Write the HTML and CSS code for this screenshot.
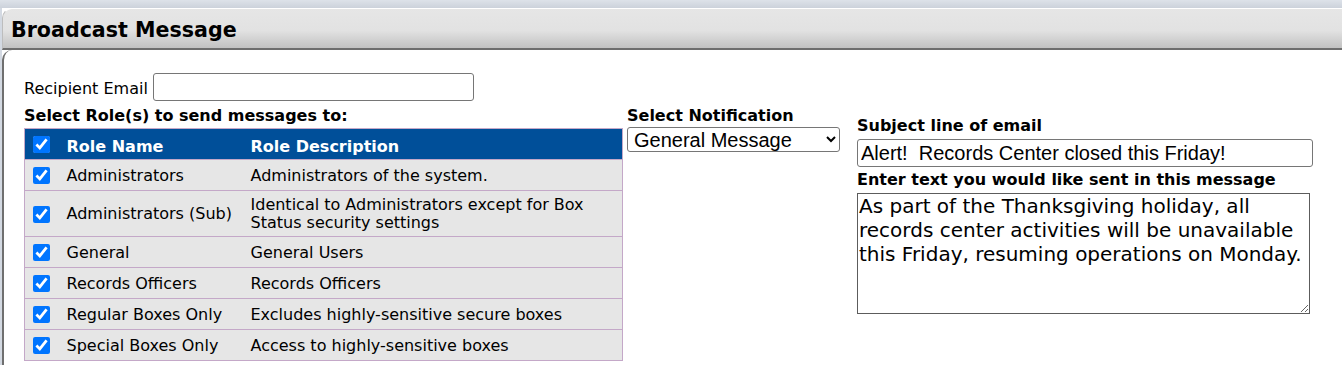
FILE: index.html
```html
<!DOCTYPE html>
<html lang="en">
<head>
    <meta charset="UTF-8">
    <title>Broadcast Message</title>
    <link rel="stylesheet" href="styles.css">
</head>
<body>
<div class="topbar"></div>
<div class="panel">
    <div class="panel-title">
        <h1>Broadcast Message</h1>
    </div>
    <div class="panel-body">
        <div class="email-row">
            <label for="recipient">Recipient Email</label>
            <input type="text" id="recipient" class="recipient">
        </div>
        <div class="columns">
            <div class="col-roles">
                <h2>Select Role(s) to send messages to:</h2>
                <table class="roles">
                    <tr class="head">
                        <th class="chk"><input type="checkbox" checked></th>
                        <th class="name">Role Name</th>
                        <th>Role Description</th>
                    </tr>
                    <tr>
                        <td class="chk"><input type="checkbox" checked></td>
                        <td>Administrators</td>
                        <td>Administrators of the system.</td>
                    </tr>
                    <tr>
                        <td class="chk"><input type="checkbox" checked></td>
                        <td>Administrators (Sub)</td>
                        <td>Identical to Administrators except for Box Status security settings</td>
                    </tr>
                    <tr>
                        <td class="chk"><input type="checkbox" checked></td>
                        <td>General</td>
                        <td>General Users</td>
                    </tr>
                    <tr>
                        <td class="chk"><input type="checkbox" checked></td>
                        <td>Records Officers</td>
                        <td>Records Officers</td>
                    </tr>
                    <tr>
                        <td class="chk"><input type="checkbox" checked></td>
                        <td>Regular Boxes Only</td>
                        <td>Excludes highly-sensitive secure boxes</td>
                    </tr>
                    <tr>
                        <td class="chk"><input type="checkbox" checked></td>
                        <td>Special Boxes Only</td>
                        <td>Access to highly-sensitive boxes</td>
                    </tr>
                </table>
            </div>
            <div class="col-notify">
                <h2>Select Notification</h2>
                <select class="notify">
                    <option>General Message</option>
                    <option>Closure Notice</option>
                    <option>Reminder</option>
                </select>
            </div>
            <div class="col-email">
                <h2>Subject line of email</h2>
                <input type="text" class="subject" value="Alert!  Records Center closed this Friday!">
                <h2>Enter text you would like sent in this message</h2>
                <textarea class="message">As part of the Thanksgiving holiday, all records center activities will be unavailable this Friday, resuming operations on Monday.</textarea>
            </div>
        </div>
    </div>
</div>
</body>
</html>
```

FILE: styles.css
```css
*{
    margin: 0;
    padding: 0;
    box-sizing: border-box;
}
body{
    background-color: #d3d9e2;
    font-family: "DejaVu Sans", Verdana, sans-serif;
    font-size: 16px;
    color: #000000;
    overflow: hidden;
}
.topbar{
    height: 8px;
    background: linear-gradient(#dde2e9, #ccd2db);
}
.panel{
    margin-left: 2px;
    background-color: #ffffff;
    height: 357px;
}
.panel-title{
    height: 42px;
    border-radius: 10px 0 0 0;
    border-top: 1px solid #ffffff;
    border-left: 1px solid #bdbdbd;
    border-bottom: 2px solid #6e6e6e;
    background: linear-gradient(#e6e6e6 0%, #e2e2e2 55%, #c2c2c2 100%);
    padding: 9px 0 0 8px;
}
.panel-title h1{
    font-size: 20.6px;
    line-height: 24px;
    font-weight: bold;
}
.panel-body{
    height: 315px;
    border-left: 2px solid #6f6f6f;
    border-radius: 10px 0 0 0;
    padding: 23px 0 0 20px;
}
.email-row{
    display: flex;
    align-items: center;
    gap: 5px;
}
.email-row label{
    padding-top: 3px;
}
.recipient{
    width: 321px;
    height: 28px;
    border: 1px solid #767676;
    border-radius: 3px;
}
.columns{
    display: flex;
    gap: 4px;
    margin-top: 5px;
}
h2{
    font-size: 16px;
    line-height: 20px;
    font-weight: bold;
}
.roles{
    width: 599px;
    border-collapse: collapse;
    margin-top: 2px;
    border: 1px solid #c4a8c8;
}
.roles td, .roles th{
    text-align: left;
    vertical-align: middle;
    padding: 5px 8px 4px 8px;
    line-height: 18px;
    font-weight: normal;
}
.roles tr{
    background-color: #e6e6e6;
    border-bottom: 1px solid #c4a8c8;
}
.roles tr.head{
    background-color: #004f99;
    color: #ffffff;
}
.roles tr.head th{
    font-weight: bold;
    padding-top: 8px;
    padding-bottom: 2px;
    height: 31px;
}
.roles td{
    height: 31px;
}
.roles .chk{
    width: 34px;
    padding-right: 0;
}
.roles .name{
    width: 184px;
}
.roles input[type=checkbox]{
    width: 17px;
    height: 17px;
    margin: 0;
    display: block;
    accent-color: #0075ff;
}
.roles tr.head input[type=checkbox]{
    margin-top: -6px;
}
.col-notify{
    width: 213px;
}
.notify{
    display: block;
    width: 213px;
    height: 25px;
    margin-top: 1px;
    font-family: "Liberation Sans", Arial, sans-serif;
    font-size: 20px;
    border: 1px solid #767676;
    border-radius: 3px;
    background-color: #ffffff;
    padding-left: 2px;
}
.col-email{
    margin-left: 13px;
    padding-top: 10px;
}
.subject{
    display: block;
    width: 456px;
    height: 28px;
    margin-top: 3px;
    font-family: "Liberation Sans", Arial, sans-serif;
    font-size: 20px;
    padding: 0 3px;
    border: 1px solid #767676;
    border-radius: 3px;
}
.col-email h2 + .subject + h2{
    margin-top: 3px;
}
.message{
    display: block;
    width: 453px;
    height: 121px;
    margin-top: 3px;
    font-family: "DejaVu Sans", Verdana, sans-serif;
    font-size: 20px;
    line-height: 24px;
    padding: 0 1px;
    border: 1px solid #5c5c5c;
    resize: both;
}
```
